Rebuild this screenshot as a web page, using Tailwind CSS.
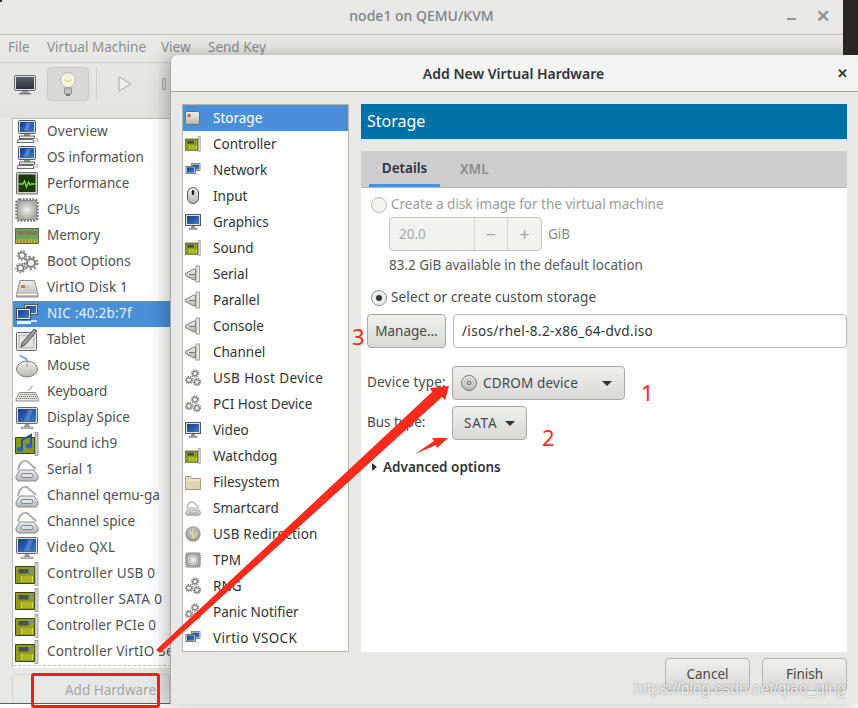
<!DOCTYPE html>
<html lang="en">
<head>
    <meta charset="UTF-8">
    <title>node1 on QEMU/KVM</title>
    <script src="https://cdn.jsdelivr.net/npm/@tailwindcss/browser@4"></script>
</head>
<body class="bg-white overflow-hidden font-['Noto_Sans',sans-serif] text-[13.5px]">

<!-- shared icons -->
<svg class="absolute w-0 h-0">
    <defs>
        <linearGradient id="scr" x1="0" y1="0" x2="1" y2="1"><stop offset="0" stop-color="#12408f"/><stop offset="1" stop-color="#3a7bc8"/></linearGradient>
        <radialGradient id="chip"><stop offset="0" stop-color="#f2f2f0"/><stop offset="1" stop-color="#a9a9a6"/></radialGradient>
        <linearGradient id="steel" x1="0" y1="0" x2="0" y2="1"><stop offset="0" stop-color="#f0f0ee"/><stop offset="1" stop-color="#b5b6b2"/></linearGradient>
        <linearGradient id="tv" x1="0" y1="0" x2="0" y2="1"><stop offset="0" stop-color="#5a6068"/><stop offset="1" stop-color="#2c3036"/></linearGradient>
        <symbol id="i-mon" viewBox="0 0 24 24">
            <rect x="3.5" y="0.5" width="17" height="13" rx="1" fill="#dcdcd8" stroke="#5a5a58"/>
            <rect x="5" y="2" width="14" height="10" fill="url(#scr)"/>
            <path d="M11 3h5l-3 8H9z" fill="#7aa5de" opacity=".5"/>
            <rect x="9" y="14" width="6" height="2" fill="#8a8a88"/>
            <rect x="4.500" y="16" width="15" height="2.500" fill="#e8e8e6" stroke="#666"/>
            <path d="M3 19.500h15l1 3H2z" fill="#f2f2f0" stroke="#6e6e6c"/>
            <path d="M19 18l4 1v2h-4" fill="none" stroke="#aaa"/>
        </symbol>
        <symbol id="i-tv" viewBox="0 0 22 20">
            <rect x="0.500" y="0.500" width="21" height="15" rx="1.500" fill="#e2e2e0" stroke="#6a6a68"/>
            <rect x="2" y="2" width="18" height="12" fill="url(#tv)"/>
            <path d="M8 16h6l1 2H7z" fill="#9a9a98"/>
            <rect x="5" y="18" width="12" height="1.500" fill="#777"/>
        </symbol>
        <symbol id="i-perf" viewBox="0 0 24 24">
            <rect x="1.500" y="0.500" width="21" height="21.500" rx="1" fill="#cfcfcc" stroke="#6b6b68"/>
            <rect x="3.500" y="2.500" width="17" height="17.500" fill="#1c3a0c"/>
            <path d="M4 12h4l1.500-3 2 6 2-5 1.500 3 1-1h4" fill="none" stroke="#7fd94a" stroke-width="1.300"/>
        </symbol>
        <symbol id="i-cpu" viewBox="0 0 24 24">
            <rect x="1.500" y="1.500" width="21" height="21" rx="3" fill="none" stroke="#777" stroke-width="2.500" stroke-dasharray="2 1.200"/>
            <rect x="2.500" y="2.500" width="19" height="19" rx="2" fill="url(#chip)" stroke="#8a8a88"/>
        </symbol>
        <symbol id="i-mem" viewBox="0 0 24 24">
            <rect x="0.500" y="4.500" width="23" height="15" fill="#6fa05c" stroke="#4f6e44"/>
            <rect x="2" y="7" width="20" height="4" fill="#7d7d5a"/>
            <path d="M1 15h22v4H1z" fill="#c9c23a"/>
            <path d="M3 15v4M6 15v4M9 15v4M12 15v4M15 15v4M18 15v4M21 15v4" stroke="#6f6b22"/>
        </symbol>
        <g id="cog"><circle r="3" fill="#f4f4f2" stroke="#808080" stroke-width="1.500"/><circle r="4.600" fill="none" stroke="#808080" stroke-width="1.500" stroke-dasharray="1.700 1.500"/></g>
        <symbol id="i-gears" viewBox="0 0 24 24">
            <use href="#cog" transform="translate(7 5.500)"/>
            <use href="#cog" transform="translate(5.500 18)"/>
            <use href="#cog" transform="translate(16 13) scale(1.350)"/>
        </symbol>
        <symbol id="i-gears2" viewBox="0 0 16 18">
            <use href="#cog" transform="translate(10 4.500) scale(.8)"/>
            <use href="#cog" transform="translate(4 11) scale(.8)"/>
            <use href="#cog" transform="translate(12 13) scale(.8)"/>
        </symbol>
        <symbol id="i-disk" viewBox="0 0 24 24">
            <path d="M5 4.500h14.500l3.500 14v2.500H1.500v-2.500z" fill="url(#steel)" stroke="#8a8a86"/>
            <path d="M2 18.500h20" stroke="#fff"/>
            <rect x="6" y="9" width="4" height="3" fill="#d87a32"/>
            <path d="M10 11h5" stroke="#bbb"/>
        </symbol>
        <symbol id="i-box" viewBox="0 0 16 16">
            <rect x="0.500" y="1.500" width="14" height="13" rx="1.500" fill="url(#steel)" stroke="#6f6f6c"/>
            <rect x="2.500" y="4" width="3" height="3" fill="#c9692a"/>
        </symbol>
        <symbol id="i-nic" viewBox="0 0 24 24">
            <rect x="9.500" y="2.500" width="13" height="10" fill="#e0e0dc" stroke="#555"/>
            <rect x="11" y="4" width="10" height="7" fill="url(#scr)"/>
            <rect x="1.500" y="6.500" width="14" height="11" fill="#e8e8e4" stroke="#444"/>
            <rect x="3" y="8" width="11" height="8" fill="url(#scr)"/>
            <path d="M2 20.500h14" stroke="#f4f4f2" stroke-width="3"/>
            <path d="M16 18h6v2h-6z" fill="#ddd"/>
        </symbol>
        <symbol id="i-tablet" viewBox="0 0 24 24">
            <rect x="1.500" y="4.500" width="20" height="18" rx="1" fill="#f4f4f2" stroke="#666"/>
            <rect x="4" y="7" width="15" height="13" fill="#e2e4e0" stroke="#aaa"/>
            <path d="M19 1l3 2-12 14-4 2 1-4z" fill="#9a9a96" stroke="#555"/>
        </symbol>
        <symbol id="i-mouse" viewBox="0 0 24 24">
            <ellipse cx="12" cy="15" rx="10.500" ry="8" fill="url(#steel)" stroke="#808080"/>
            <path d="M12 7v6" stroke="#8aa" />
            <path d="M5 1c1 3 7 2 7 6" fill="none" stroke="#5a8fc8" stroke-width="1.300"/>
        </symbol>
        <symbol id="i-kbd" viewBox="0 0 24 24">
            <path d="M4.500 12.500h16l3 6.500v2H1v-2z" fill="#e6e6e2" stroke="#8a8a86"/>
            <path d="M5 14.500h15M4 16.500h17M3 18.500h19" stroke="#777" stroke-dasharray="1.300 .7"/>
            <path d="M13 11c-2-2 6-1 3-4-1-1 0-1 2-1" fill="none" stroke="#aaa"/>
        </symbol>
        <symbol id="i-disp" viewBox="0 0 24 24">
            <rect x="1.500" y="1.500" width="21" height="16" rx="1" fill="#dededa" stroke="#666"/>
            <rect x="3" y="3" width="18" height="13" fill="url(#scr)"/>
            <path d="M13 4h5l-4 11H9z" fill="#7aa5de" opacity=".45"/>
            <path d="M10 18h4l1 3H9z" fill="#999"/>
            <rect x="6" y="21" width="12" height="1.800" fill="#c9c9c6" stroke="#777" stroke-width=".5"/>
        </symbol>
        <symbol id="i-snd" viewBox="0 0 24 24">
            <path d="M0.500 5.500h19v16H0.500z" fill="#8a9a1e" stroke="#3c420c"/>
            <rect x="20" y="0.500" width="3" height="23" fill="#ccc" stroke="#777" stroke-width=".6"/>
            <path d="M7 17V8l9-5v10" fill="none" stroke="#1e56ad" stroke-width="2"/>
            <ellipse cx="5" cy="17.500" rx="3.500" ry="2.500" fill="#2b67c2"/>
            <ellipse cx="14" cy="14" rx="3.500" ry="2.500" fill="#2b67c2"/>
        </symbol>
        <symbol id="i-ser" viewBox="0 0 24 24">
            <path d="M3 12C4 5 8 2 12 3l9 8" fill="none" stroke="#aaa" stroke-width="1.800"/>
            <path d="M5 12h14l4 6v3l-2 2H3l-2-2v-3z" fill="url(#steel)" stroke="#8a8a86"/>
            <rect x="6" y="15.500" width="12" height="4" rx="2" fill="#dfe3ea" stroke="#7a8696"/>
        </symbol>
        <symbol id="i-card" viewBox="0 0 24 24">
            <path d="M0.500 4.500h19v17H0.500z" fill="#8f9c20" stroke="#3c420c"/>
            <rect x="3.500" y="7" width="10" height="4.500" fill="#4a4f50"/>
            <rect x="13.500" y="7.500" width="4.500" height="1.500" fill="#5b8fd0"/>
            <path d="M6 14h12v6H6z" fill="#dcde2c"/>
            <path d="M8 14v6M10 14v6M12 14v6M14 14v6M16 14v6" stroke="#7f8c1c"/>
            <rect x="20" y="0.500" width="3" height="23" fill="#d6d6d2" stroke="#777" stroke-width=".6"/>
        </symbol>
        <symbol id="i-mon2" viewBox="0 0 16 16">
            <rect x="0.500" y="0.500" width="15" height="11" fill="#dededa" stroke="#555"/>
            <rect x="2" y="2" width="12" height="8" fill="url(#scr)"/>
            <path d="M6.500 12h3l.5 2H6z" fill="#888"/>
            <rect x="4" y="14" width="8" height="1.500" fill="#bbb" stroke="#666" stroke-width=".5"/>
        </symbol>
        <symbol id="i-mice" viewBox="0 0 16 18">
            <rect x="2.500" y="0.500" width="11" height="16" rx="5.500" fill="url(#steel)" stroke="#555"/>
            <rect x="6.800" y="3" width="2.400" height="5" rx="1.200" fill="#222"/>
        </symbol>
        <symbol id="i-plug" viewBox="0 0 16 18">
            <path d="M0.500 8.500L9 4h1.500v11H9L0.500 10.500z" fill="url(#steel)" stroke="#7a7a76"/>
            <rect x="11" y="1" width="3.500" height="16" fill="#e6e6e2" stroke="#8a8a86" stroke-width=".8"/>
            <path d="M4 9.500h6" stroke="#777"/>
        </symbol>
        <symbol id="i-folder" viewBox="0 0 16 16">
            <path d="M0.500 2.500h5l1.500 2h8.500v11H.5z" fill="#e3d2b3" stroke="#a89a80"/>
            <path d="M.5 6h15" stroke="#f4eadb"/>
        </symbol>
        <symbol id="i-usb" viewBox="0 0 16 16">
            <circle cx="8" cy="8" r="7.700" fill="#9a9a96"/>
            <circle cx="8" cy="7" r="6" fill="#b4b4b0"/>
            <path d="M8 2v11M8 9L5 7V5M8 11l3-2V6" fill="none" stroke="#e8dc98" stroke-width="1.200"/>
        </symbol>
        <symbol id="i-cd" viewBox="0 0 16 16">
            <circle cx="8" cy="8" r="7.500" fill="url(#steel)" stroke="#777"/>
            <circle cx="8" cy="8" r="4.500" fill="#dedede" stroke="#bbb"/>
            <circle cx="8" cy="8" r="2.200" fill="#999" stroke="#666" stroke-width=".6"/>
            <circle cx="8" cy="8" r=".8" fill="#fff"/>
        </symbol>
    </defs>
</svg>

<!-- VM window -->
<div class="flex flex-col w-[843px] h-[704px] bg-[#e8e8e7] border-b border-[#5e5e5c] text-[#4c5152]">
    <div class="relative h-[35px] shrink-0 flex items-center justify-center pb-[4px] border-b border-[#bdbdbb] text-[14px] font-medium text-[#7f8283]">
        node1 on QEMU/KVM
        <span class="absolute left-[787px] top-[18px] w-[9px] h-[2px] bg-[#949493]"></span>
        <span class="absolute left-[816px] top-[7px] text-[17px] leading-[17px] font-bold text-[#949493]">✕</span>
    </div>
    <div class="h-[28px] shrink-0 flex items-center pl-[8px] pb-[3px] border-b border-[#cfcfcd] text-[#8b8e8f]">
        <span class="w-[39px]">File</span><span class="w-[114px]">Virtual Machine</span><span class="w-[47px]">View</span><span>Send Key</span>
    </div>
    <div class="h-[55px] shrink-0 flex pl-[14px] pt-[4px] bg-linear-to-b from-[#e8e8e7] to-[#e2e2e0]">
        <svg class="w-[22px] h-[20px] mt-[8px] mr-[11px]"><use href="#i-tv"/></svg>
        <div class="w-[42px] h-[34px] flex items-center justify-center rounded-[4px] border border-[#c9c9c7] bg-[#d8d8d6]">
            <svg class="w-[20px] h-[26px]" viewBox="0 0 20 26">
                <circle cx="10" cy="9" r="7.500" fill="#f4f2e2" stroke="#b5b5ae"/>
                <path d="M6 9c3 1.500 5 1.500 8 0" fill="none" stroke="#e9dd7a" stroke-width="1.400"/>
                <rect x="6.500" y="17" width="7" height="6" rx="1" fill="#c2c2be" stroke="#8c8c88"/>
                <rect x="8" y="23" width="4" height="2" fill="#777"/>
            </svg>
        </div>
        <span class="w-px h-[34px] ml-[7px] bg-[#d2d2d0]"></span>
        <svg class="w-[14px] h-[16px] ml-[21px] mt-[9px]" viewBox="0 0 14 16"><path d="M1 1l12 7-12 7z" fill="#efefed" stroke="#a8a8a6"/></svg>
        <span class="w-[4px] h-[12px] ml-[30px] mt-[11px] bg-[#d8d8d6] border border-[#b0b0ae]"></span>
    </div>
    <div class="flex-1 min-h-0 flex flex-col pl-[12px]">
        <div class="h-[550px] shrink-0 overflow-hidden bg-white border border-[#bdbdba] border-b-0 *:h-[26px] *:flex *:items-center *:whitespace-nowrap *:pb-[2px]">
            <div class="tracking-[.25px]"><svg class="w-6 h-6 ml-[2px] mr-2 mt-[2px] shrink-0"><use href="#i-mon"/></svg>Overview</div>
            <div><svg class="w-6 h-6 ml-[2px] mr-2 mt-[2px] shrink-0"><use href="#i-mon"/></svg>OS information</div>
            <div><svg class="w-6 h-6 ml-[2px] mr-2 mt-[2px] shrink-0"><use href="#i-perf"/></svg>Performance</div>
            <div><svg class="w-6 h-6 ml-[2px] mr-2 mt-[2px] shrink-0"><use href="#i-cpu"/></svg>CPUs</div>
            <div><svg class="w-6 h-6 ml-[2px] mr-2 mt-[2px] shrink-0"><use href="#i-mem"/></svg>Memory</div>
            <div><svg class="w-6 h-6 ml-[2px] mr-2 mt-[2px] shrink-0"><use href="#i-gears"/></svg>Boot Options</div>
            <div class="tracking-[.15px]"><svg class="w-6 h-6 ml-[2px] mr-2 mt-[2px] shrink-0"><use href="#i-disk"/></svg>VirtIO Disk 1</div>
            <div class="bg-[#4a90d9] text-[#e8f0fa] tracking-[.25px]"><svg class="w-6 h-6 ml-[2px] mr-2 mt-[2px] shrink-0"><use href="#i-nic"/></svg>NIC :40:2b:7f</div>
            <div><svg class="w-6 h-6 ml-[2px] mr-2 mt-[2px] shrink-0"><use href="#i-tablet"/></svg>Tablet</div>
            <div><svg class="w-6 h-6 ml-[2px] mr-2 mt-[2px] shrink-0"><use href="#i-mouse"/></svg>Mouse</div>
            <div><svg class="w-6 h-6 ml-[2px] mr-2 mt-[2px] shrink-0"><use href="#i-kbd"/></svg>Keyboard</div>
            <div><svg class="w-6 h-6 ml-[2px] mr-2 mt-[2px] shrink-0"><use href="#i-disp"/></svg>Display Spice</div>
            <div><svg class="w-6 h-6 ml-[2px] mr-2 mt-[2px] shrink-0"><use href="#i-snd"/></svg>Sound ich9</div>
            <div><svg class="w-6 h-6 ml-[2px] mr-2 mt-[2px] shrink-0"><use href="#i-ser"/></svg>Serial 1</div>
            <div><svg class="w-6 h-6 ml-[2px] mr-2 mt-[2px] shrink-0"><use href="#i-ser"/></svg>Channel qemu-ga</div>
            <div><svg class="w-6 h-6 ml-[2px] mr-2 mt-[2px] shrink-0"><use href="#i-ser"/></svg>Channel spice</div>
            <div class="tracking-[.45px]"><svg class="w-6 h-6 ml-[2px] mr-2 mt-[2px] shrink-0"><use href="#i-disp"/></svg>Video QXL</div>
            <div class="tracking-[.25px]"><svg class="w-6 h-6 ml-[2px] mr-2 mt-[2px] shrink-0"><use href="#i-card"/></svg>Controller USB 0</div>
            <div class="tracking-[.4px]"><svg class="w-6 h-6 ml-[2px] mr-2 mt-[2px] shrink-0"><use href="#i-card"/></svg>Controller SATA 0</div>
            <div class="tracking-[.12px]"><svg class="w-6 h-6 ml-[2px] mr-2 mt-[2px] shrink-0"><use href="#i-card"/></svg>Controller PCIe 0</div>
            <div class="tracking-[.2px]"><svg class="w-6 h-6 ml-[2px] mr-2 mt-[2px] shrink-0"><use href="#i-card"/></svg>Controller VirtIO Serial 0</div>
            <div class="!h-[2px] !pb-0 border-t border-dashed border-[#bdbdba]"></div>
        </div>
        <div class="w-[158px] h-[30px] mt-[6px] flex items-center justify-end pt-[3px] pr-[13px] rounded-t-[4px] border border-b-0 border-[#d4d4d2] text-[#a3a5a5]">Add Hardware</div>
    </div>
</div>

<!-- Add New Virtual Hardware dialog -->
<div class="absolute left-[170px] top-[55px] w-[688px] h-[649px] flex flex-col bg-[#e8e8e7] rounded-t-[7px] border-l border-[#a8a8a6] shadow-[-4px_0_18px_rgba(0,0,0,0.28)] text-[#2e3436]">
    <div class="relative h-[37px] shrink-0 flex items-center justify-center rounded-t-[7px] bg-[#f4f4f4] border-b border-[#a9a9a7] text-[14px] font-semibold pr-[2px]">
        Add New Virtual Hardware
        <span class="absolute right-[10px] top-[10px] text-[13px] leading-[17px] font-bold">✕</span>
    </div>
    <div class="flex-1 min-h-0 flex gap-[12px] pl-[11px] pr-[11px] pt-[12px]">
        <div class="w-[167px] h-[548px] shrink-0 bg-white border border-[#b6b6b3] *:h-[26px] *:flex *:items-center">
            <div class="bg-[#4a90d9] text-white"><svg class="w-4 h-4 ml-[2px] mr-[12px]"><use href="#i-box"/></svg>Storage</div>
            <div><svg class="w-4 h-[18px] ml-[2px] mr-[12px]"><use href="#i-card"/></svg>Controller</div>
            <div><svg class="w-4 h-4 ml-[2px] mr-[12px]"><use href="#i-nic"/></svg>Network</div>
            <div><svg class="w-4 h-[18px] ml-[2px] mr-[12px]"><use href="#i-mice"/></svg>Input</div>
            <div><svg class="w-4 h-4 ml-[2px] mr-[12px]"><use href="#i-mon2"/></svg>Graphics</div>
            <div><svg class="w-4 h-[18px] ml-[2px] mr-[12px]"><use href="#i-card"/></svg>Sound</div>
            <div><svg class="w-4 h-[18px] ml-[2px] mr-[12px]"><use href="#i-plug"/></svg>Serial</div>
            <div><svg class="w-4 h-[18px] ml-[2px] mr-[12px]"><use href="#i-plug"/></svg>Parallel</div>
            <div><svg class="w-4 h-[18px] ml-[2px] mr-[12px]"><use href="#i-plug"/></svg>Console</div>
            <div><svg class="w-4 h-[18px] ml-[2px] mr-[12px]"><use href="#i-plug"/></svg>Channel</div>
            <div class="tracking-[.4px]"><svg class="w-4 h-[18px] ml-[2px] mr-[12px]"><use href="#i-gears2"/></svg>USB Host Device</div>
            <div><svg class="w-4 h-[18px] ml-[2px] mr-[12px]"><use href="#i-gears2"/></svg>PCI Host Device</div>
            <div><svg class="w-4 h-4 ml-[2px] mr-[12px]"><use href="#i-mon2"/></svg>Video</div>
            <div><svg class="w-4 h-[18px] ml-[2px] mr-[12px]"><use href="#i-card"/></svg>Watchdog</div>
            <div><svg class="w-4 h-4 ml-[2px] mr-[12px]"><use href="#i-folder"/></svg>Filesystem</div>
            <div><svg class="w-4 h-4 ml-[2px] mr-[12px]"><use href="#i-ser"/></svg>Smartcard</div>
            <div class="tracking-[.2px]"><svg class="w-4 h-4 ml-[2px] mr-[12px]"><use href="#i-usb"/></svg>USB Redirection</div>
            <div><svg class="w-4 h-4 ml-[2px] mr-[12px]"><use href="#i-cpu"/></svg>TPM</div>
            <div><svg class="w-4 h-[18px] ml-[2px] mr-[12px]"><use href="#i-gears2"/></svg>RNG</div>
            <div><svg class="w-4 h-[18px] ml-[2px] mr-[12px]"><use href="#i-gears2"/></svg>Panic Notifier</div>
            <div class="tracking-[.33px]"><svg class="w-4 h-4 ml-[2px] mr-[12px]"><use href="#i-nic"/></svg>Virtio VSOCK</div>
        </div>
        <div class="w-[486px] shrink-0 flex flex-col">
            <div class="h-[35px] shrink-0 flex items-center pl-[6px] pb-px bg-[#0072a8] text-white text-[16px]">Storage</div>
            <div class="h-[37px] mt-[12px] shrink-0 flex bg-[#cecece] border-b border-[#b4b4b2]">
                <div class="ml-[8px] w-[71px] flex items-center justify-center border-b-[3px] border-[#4a90d9] font-semibold pt-[2px]">Details</div>
                <div class="ml-[20px] flex items-center font-semibold text-[#8a8c8c] -mb-px">XML</div>
            </div>
            <div class="h-[464px] shrink-0 bg-white flex flex-col pt-[8px]">
                <label class="h-[17px] flex items-center pl-[10px] gap-[4px] text-[#9a9c9c]">
                    <span class="w-[16px] h-[16px] rounded-full border border-[#b9b9b7] bg-[#f4f4f3]"></span>Create a disk image for the virtual machine
                </label>
                <div class="mt-[4px] ml-[28px] flex items-center">
                    <div class="w-[153px] h-[34px] flex rounded-[4px] border border-[#c4c4c2] bg-[#f2f2f1] text-[#a6a8a8]">
                        <span class="w-[85px] flex items-center pl-[9px] border-r border-[#d6d6d4]">20.0</span>
                        <span class="w-[33px] flex items-center justify-center border-r border-[#d6d6d4] text-[18px]">−</span>
                        <span class="flex-1 flex items-center justify-center text-[18px]">+</span>
                    </div>
                    <span class="ml-[6px] text-[#8a8c8c]">GiB</span>
                </div>
                <div class="ml-[28px] mt-[4px] h-[21px] flex items-center text-[#555a5b]">83.2 GiB available in the default location</div>
                <label class="mt-[13px] h-[17px] flex items-center pl-[10px] gap-[4px] text-[#454a4b] tracking-[.17px]">
                    <span class="w-[16px] h-[16px] flex items-center justify-center rounded-full border border-[#8f8f8d] bg-[#ececeb]"><span class="w-[6px] h-[6px] rounded-full bg-[#2e3436]"></span></span>Select or create custom storage
                </label>
                <div class="mt-[8px] ml-[6px] flex gap-[7px]">
                    <button class="w-[79px] h-[34px] rounded-[4px] border border-[#a9a9a7] bg-linear-to-b from-[#efefee] to-[#d9d9d7] text-[#454a4b]">Manage...</button>
                    <div class="w-[394px] h-[34px] flex items-center pl-[8px] rounded-[4px] border border-[#b4b4b2] bg-white tracking-[.35px]">/isos/rhel-8.2-x86_64-dvd.iso</div>
                </div>
                <div class="mt-[18px] ml-[6px] flex items-center">
                    <span class="w-[85px] pb-[2px] text-[#454a4b] tracking-[.2px]">Device type:</span>
                    <div class="w-[173px] h-[34px] flex items-center rounded-[4px] border border-[#a9a9a7] bg-linear-to-b from-[#efefee] to-[#d9d9d7] text-[#454a4b] tracking-[.15px]">
                        <svg class="w-4 h-4 ml-[8px] mr-[6px]"><use href="#i-cd"/></svg>CDROM device
                        <span class="ml-[24px] w-0 h-0 border-x-[5px] border-x-transparent border-t-[5px] border-t-[#2e3436]"></span>
                    </div>
                </div>
                <div class="mt-[6px] ml-[6px] flex items-center">
                    <span class="w-[85px] pb-[2px] text-[#454a4b]">Bus type:</span>
                    <div class="w-[75px] h-[34px] flex items-center rounded-[4px] border border-[#a9a9a7] bg-linear-to-b from-[#efefee] to-[#d9d9d7] text-[#454a4b]">
                        <span class="ml-[11px] tracking-[.75px]">SATA</span>
                        <span class="ml-[8px] w-0 h-0 border-x-[5px] border-x-transparent border-t-[5px] border-t-[#2e3436]"></span>
                    </div>
                </div>
                <div class="mt-[17px] ml-[11px] flex items-center font-semibold">
                    <span class="w-0 h-0 border-y-[4px] border-y-transparent border-l-[5px] border-l-[#2e3436] mr-[6px]"></span>Advanced options
                </div>
            </div>
            <div class="mt-[6px] flex justify-end gap-[12px]">
                <button class="w-[85px] h-[33px] rounded-[4px] border border-[#b4b4b2] bg-linear-to-b from-[#efefee] to-[#d9d9d7] text-[#454a4b]">Cancel</button>
                <button class="w-[85px] h-[33px] rounded-[4px] border border-[#b4b4b2] bg-linear-to-b from-[#efefee] to-[#d9d9d7] text-[#454a4b]">Finish</button>
            </div>
        </div>
    </div>
</div>

<!-- window corners behind everything -->
<div class="absolute left-[843px] top-0 w-[15px] h-[55px] bg-[#2a2626]"></div>
<div class="absolute left-0 top-0 w-[2px] h-[2px] bg-[#2a2626]"></div>

<!-- red annotations -->
<svg class="absolute left-0 top-0 w-[858px] h-[708px] pointer-events-none" viewBox="0 0 858 708">
    <polygon points="156,650 432,392 430,388 449,386 445,400 442,397 160,653" fill="#fa2a1c"/>
    <polygon points="415,454 434,441 432,438 448,438 437,448 436,445" fill="#fa2a1c"/>
</svg>
<div class="absolute left-[31px] top-[673px] w-[129px] h-[35px] rounded-[3px] border-[3px] border-[#ee2016]"></div>
<span class="absolute left-[352px] top-[322px] text-[22px] leading-[28px] text-[#fa2a1c]">3</span>
<span class="absolute left-[641px] top-[378px] text-[22px] leading-[28px] text-[#fa2a1c]">1</span>
<span class="absolute left-[542px] top-[423px] text-[22px] leading-[28px] text-[#fa2a1c]">2</span>
<span class="absolute left-[634px] top-[678px] font-['Liberation_Sans',sans-serif] text-[15.6px] leading-[22px] text-white/80 [text-shadow:0_0_2px_rgba(90,90,90,0.75)]">https://blog.csdn.net/qiao_qing</span>

</body>
</html>
